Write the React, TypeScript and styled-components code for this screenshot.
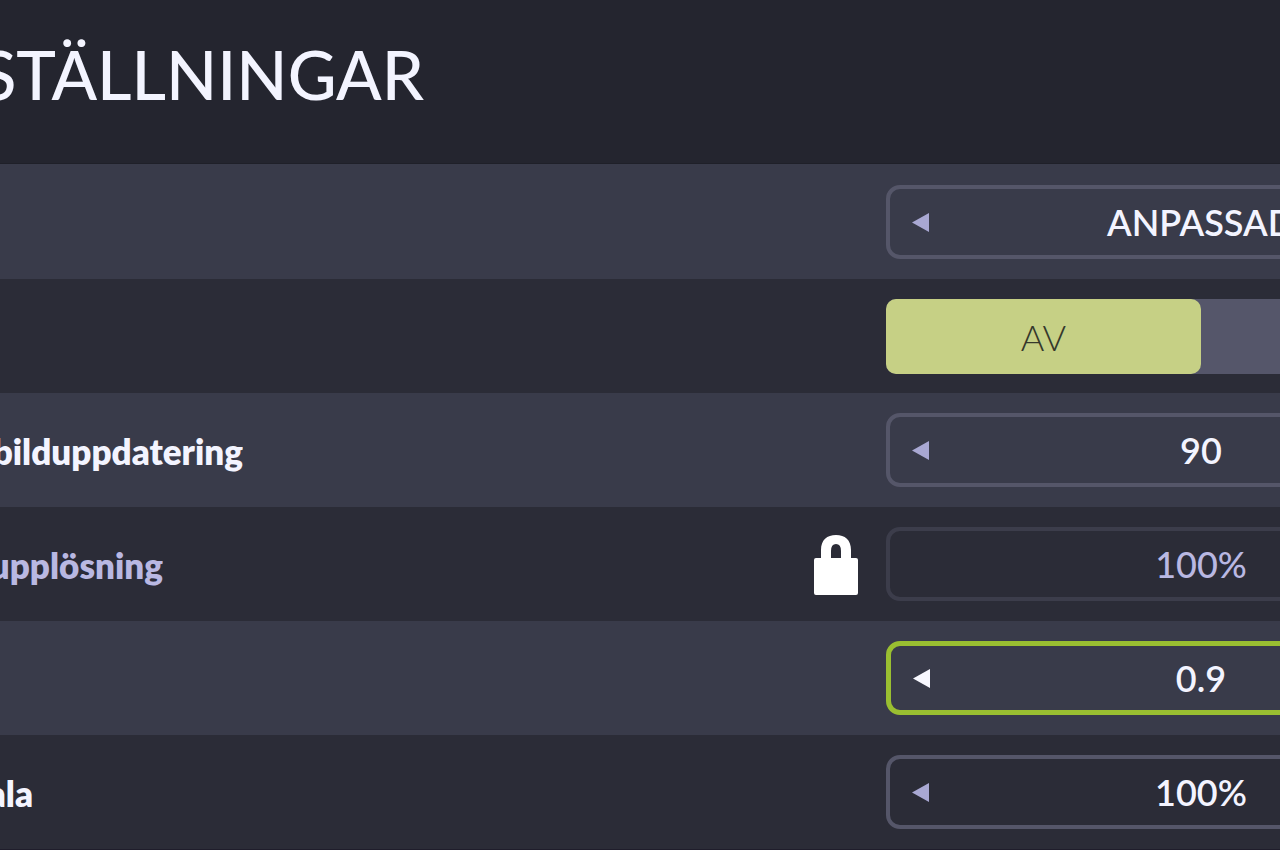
import React from "react";
import styled, { createGlobalStyle } from "styled-components";

const GlobalStyle = createGlobalStyle`
  * { box-sizing: border-box; }
  body {
    margin: 0;
    background: #24252f;
    font-family: Lato, "Open Sans", sans-serif;
    overflow-x: hidden;
  }
`;

const Page = styled.main`
  overflow: hidden;
  color: #f3f4ff;
`;

const Header = styled.header`
  display: flex;
  height: 164px;
  padding-top: 34px;
  background: #24252f;
  border-bottom: 1px solid #1f2029;
`;

const Title = styled.h1`
  display: flex;
  justify-content: flex-end;
  width: 424px;
  margin: 0;
  overflow: hidden;
  font-size: 67px;
  line-height: 80px;
  font-weight: 500;
  white-space: nowrap;
`;

const List = styled.div`
  padding-top: 1px;
  background: #393b4a;
  border-bottom: 1px solid #1f1d2b;
`;

const Row = styled.div<{ $dark?: boolean }>`
  display: grid;
  grid-template-columns: minmax(0, 1fr) 394px;
  height: 114px;
  padding-top: 20px;
  background: ${(p) => (p.$dark ? "#2b2c37" : "#393b4a")};
`;

const LabelCell = styled.div`
  display: flex;
  justify-content: space-between;
  align-items: center;
  height: 75px;
  padding-right: 28px;
`;

const Label = styled.span<{ $width: number; $muted?: boolean }>`
  display: flex;
  justify-content: flex-end;
  width: ${(p) => p.$width}px;
  overflow: hidden;
  color: ${(p) => (p.$muted ? "#b9b8e2" : "#f3f4ff")};
  font-size: 35px;
  line-height: 44px;
  font-weight: 800;
  white-space: nowrap;
`;

type Tone = "normal" | "locked" | "focused";

const frameColor: Record<Tone, string> = {
  normal: "#555669",
  locked: "#3c3d4b",
  focused: "#9abf31",
};

const Stepper = styled.div<{ $tone: Tone }>`
  display: grid;
  grid-template-columns: 60px 1fr 60px;
  align-items: center;
  width: 630px;
  height: 74px;
  border: ${(p) => (p.$tone === "focused" ? 5 : 4)}px solid ${(p) => frameColor[p.$tone]};
  border-radius: 14px;
`;

const Value = styled.output<{ $muted?: boolean }>`
  grid-column: 2;
  text-align: center;
  color: ${(p) => (p.$muted ? "#b9b8e2" : "#f3f4ff")};
  font-size: 36px;
  line-height: 44px;
  font-weight: ${(p) => (p.$muted ? 500 : 600)};
`;

const ArrowButton = styled.button<{ $bright?: boolean }>`
  display: flex;
  justify-content: center;
  padding: 0;
  border: 0;
  background: none;
  color: ${(p) => (p.$bright ? "#f8f8ff" : "#a9a8d3")};
`;

const Toggle = styled.div`
  display: flex;
  width: 630px;
  height: 75px;
  background: #55566a;
  border-radius: 10px;
`;

const ToggleOption = styled.button<{ $on?: boolean }>`
  flex: 1;
  padding: 0;
  border: 0;
  border-radius: 10px;
  background: ${(p) => (p.$on ? "#c6d085" : "transparent")};
  color: #35382c;
  font-family: inherit;
  font-size: 36px;
  font-weight: 300;
`;

const LockIcon = () => (
  <svg width="44" height="62" viewBox="0 0 44 62" aria-label="Låst" role="img">
    <path
      fill="#fff"
      fillRule="evenodd"
      d="M7 24V16C7 6 13 1 22 1S37 6 37 16V24H42Q44 24 44 26V59Q44 61 42 61H2Q0 61 0 59V26Q0 24 2 24ZM17 24H27V17Q27 10 22 10T17 17Z"
    />
  </svg>
);

const Arrow = () => (
  <svg width="17" height="19" viewBox="0 0 17 19" aria-hidden="true">
    <path fill="currentColor" d="M0 9.5L17 0V19Z" />
  </svg>
);

interface Setting {
  label?: string;
  width?: number;
  value?: string;
  tone?: Tone;
}

const settings: Setting[] = [
  { value: "ANPASSAD" },
  {},
  { label: "bilduppdatering", width: 243, value: "90" },
  { label: "upplösning", width: 163, value: "100%", tone: "locked" },
  { value: "0.9", tone: "focused" },
  { label: "ala", width: 33, value: "100%" },
];

const SettingRow = ({ setting, dark }: { setting: Setting; dark: boolean }) => {
  const { label, width = 0, value, tone = "normal" } = setting;
  const locked = tone === "locked";
  return (
    <Row $dark={dark}>
      <LabelCell>
        {label ? <Label $width={width} $muted={locked}>{label}</Label> : null}
        {locked && <LockIcon />}
      </LabelCell>
      {value ? (
        <Stepper $tone={tone} role="group" aria-label={label}>
          {!locked && (
            <ArrowButton type="button" $bright={tone === "focused"}>
              <Arrow />
            </ArrowButton>
          )}
          <Value $muted={locked}>{value}</Value>
        </Stepper>
      ) : (
        <Toggle role="group">
          <ToggleOption type="button" $on aria-pressed>AV</ToggleOption>
          <ToggleOption type="button" aria-pressed={false} />
        </Toggle>
      )}
    </Row>
  );
};

export default function App() {
  return (
    <>
      <GlobalStyle />
      <Page>
        <Header>
          <Title>STÄLLNINGAR</Title>
        </Header>
        <List>
          {settings.map((setting, i) => (
            <SettingRow key={i} setting={setting} dark={i % 2 === 1} />
          ))}
        </List>
      </Page>
    </>
  );
}
